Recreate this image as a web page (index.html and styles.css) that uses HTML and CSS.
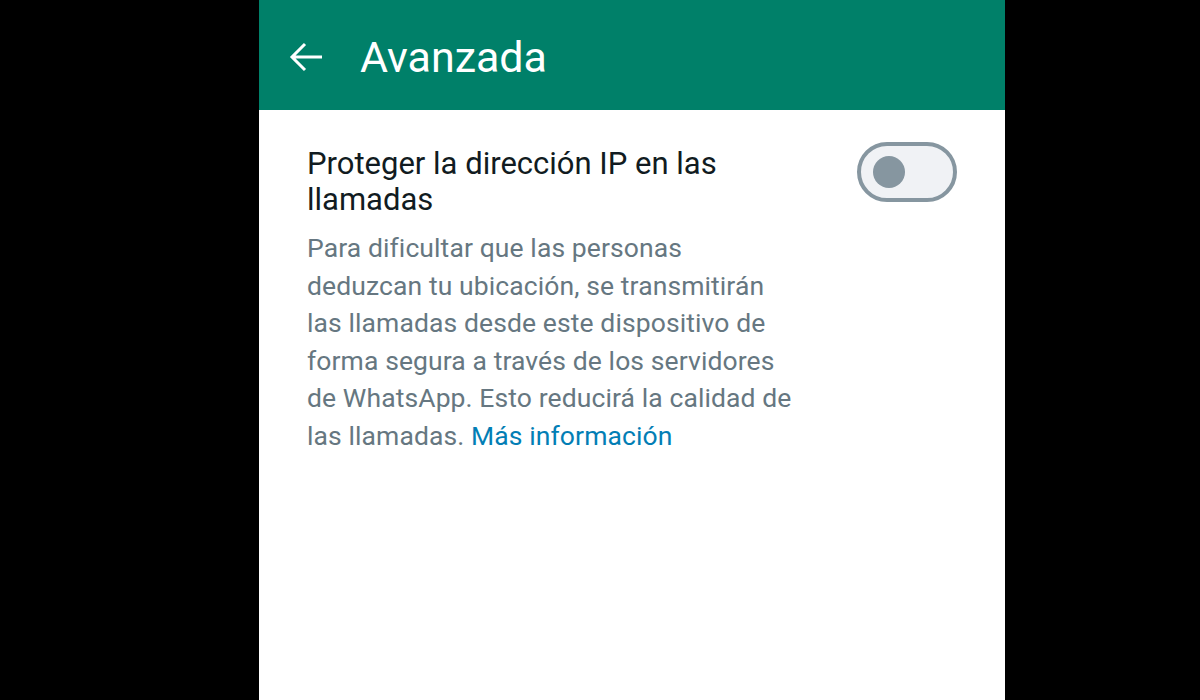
FILE: index.html
```html
<!DOCTYPE html>
<html lang="es">
<head>
    <meta charset="UTF-8">
    <meta name="viewport" content="width=device-width, initial-scale=1.0">
    <title>Avanzada</title>
    <link rel="stylesheet" href="styles.css">
</head>
<body>
    <div class="screen">
        <header class="app-bar">
            <span class="back">
                <svg width="48" height="48" viewBox="0 0 24 24">
                    <path d="M20 12H5M11.5 5.5L5 12l6.5 6.5" fill="none" stroke="#ffffff" stroke-width="1.5"/>
                </svg>
            </span>
            <h1>Avanzada</h1>
        </header>

        <div class="setting">
            <div class="setting-text">
                <p class="setting-title">Proteger la dirección IP en las<br>llamadas</p>
                <p class="setting-desc">
                    Para dificultar que las personas<br>
                    deduzcan tu ubicación, se transmitirán<br>
                    las llamadas desde este dispositivo de<br>
                    forma segura a través de los servidores<br>
                    de WhatsApp. Esto reducirá la calidad de<br>
                    las llamadas. <a href="#">Más información</a>
                </p>
            </div>
            <div class="switch">
                <span class="knob"></span>
            </div>
        </div>
    </div>
</body>
</html>
```

FILE: styles.css
```css
body {
    margin: 0;
    background-color: #000;
    font-family: Roboto, "Noto Sans", Arial, sans-serif;
    height: 700px;
    overflow: hidden;
}

.screen {
    margin-left: 259px;
    width: 746px;
    height: 700px;
    background-color: #fff;
}

.app-bar {
    height: 110px;
    background-color: #008069;
    display: flex;
    align-items: center;
    padding: 4px 0 0 23px;
    box-sizing: border-box;
}

.back {
    display: flex;
}

.app-bar h1 {
    margin: 0 0 0 30px;
    color: #fff;
    font-size: 43px;
    font-weight: 400;
}

.setting {
    display: flex;
    align-items: flex-start;
    padding: 36px 0 0 48px;
}

.setting-text {
    width: 500px;
    white-space: nowrap;
}

.setting-title {
    margin: 0;
    color: #111b21;
    font-size: 31px;
    line-height: 36px;
}

.setting-desc {
    margin: 11px 0 0;
    color: #667781;
    font-size: 26.5px;
    line-height: 37.6px;
    letter-spacing: 0.1px;
}

.setting-desc a {
    color: #027eb5;
    text-decoration: none;
}

.switch {
    margin: -4px 0 0 50px;
    width: 80px;
    height: 52px;
    border: 4px solid #8696a0;
    border-radius: 30px;
    background-color: #f0f2f5;
    display: flex;
    align-items: center;
    padding-left: 12px;
}

.knob {
    width: 32px;
    height: 32px;
    border-radius: 50%;
    background-color: #8696a0;
}
```
